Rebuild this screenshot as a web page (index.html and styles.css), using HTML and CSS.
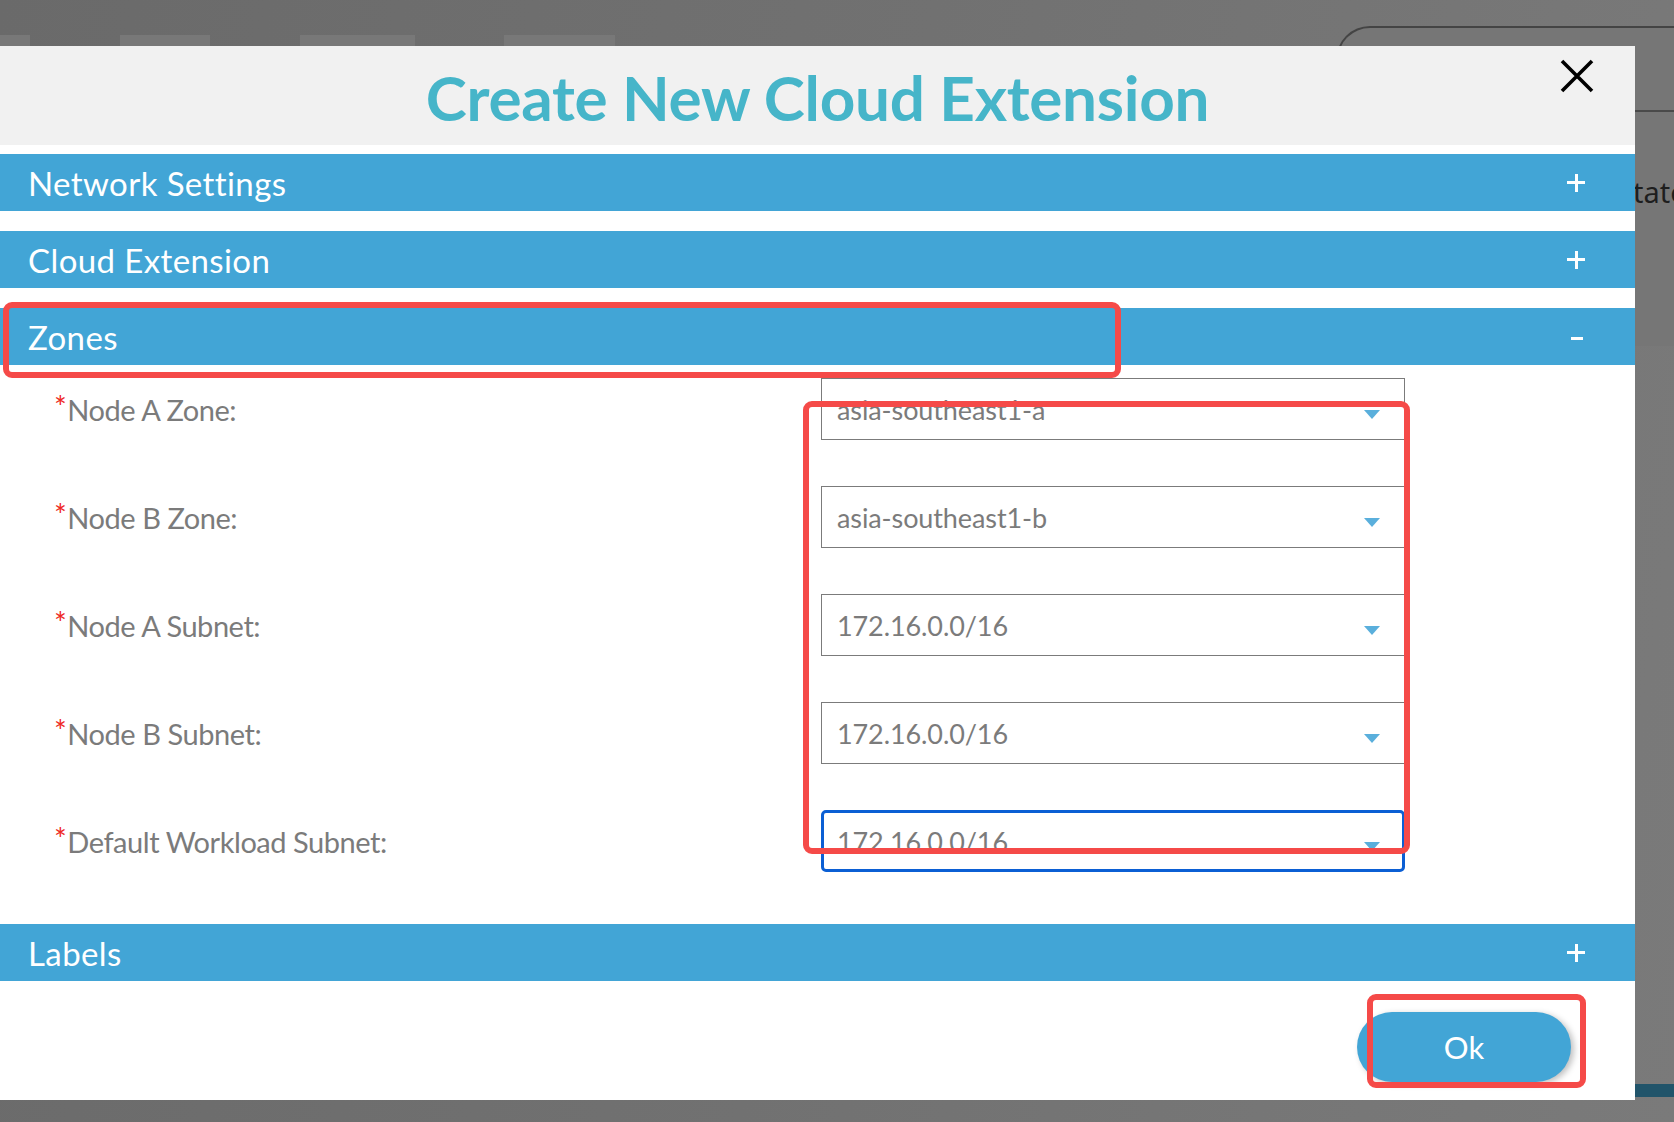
FILE: index.html
```html
<!DOCTYPE html>
<html lang="en">
<head>
<meta charset="utf-8">
<title>Create New Cloud Extension</title>
<link rel="stylesheet" href="styles.css">
</head>
<body>
<div class="page">
  <div class="bg-tabs">
    <span class="bg-tab t1"></span>
    <span class="bg-tab t2"></span>
    <span class="bg-tab t3"></span>
    <span class="bg-tab t4"></span>
  </div>
  <div class="bg-card">
    <div class="bg-card-head"></div>
    <div class="bg-card-row"><span class="bg-text">tate</span></div>
  </div>
  <div class="bg-strip"></div>

  <div class="modal">
    <header class="modal-head">
      <h1 class="modal-title">Create New Cloud Extension</h1>
      <button class="close" aria-label="Close">
        <svg width="34" height="34" viewBox="0 0 34 34"><path d="M2 2 L32 32 M32 2 L2 32" stroke="#000" stroke-width="3.6" fill="none"/></svg>
      </button>
    </header>

    <div class="bar first">
      <span class="bar-title">Network Settings</span>
      <span class="plus"></span>
    </div>
    <div class="bar">
      <span class="bar-title">Cloud Extension</span>
      <span class="plus"></span>
    </div>
    <div class="bar">
      <span class="bar-title">Zones</span>
      <span class="minus"></span>
    </div>

    <div class="zones">
      <div class="row">
        <label class="label"><span class="req">*</span>Node A Zone:</label>
        <div class="select"><span class="value">asia-southeast1-a</span><span class="caret"></span></div>
      </div>
      <div class="row">
        <label class="label"><span class="req">*</span>Node B Zone:</label>
        <div class="select"><span class="value">asia-southeast1-b</span><span class="caret"></span></div>
      </div>
      <div class="row">
        <label class="label"><span class="req">*</span>Node A Subnet:</label>
        <div class="select"><span class="value">172.16.0.0/16</span><span class="caret"></span></div>
      </div>
      <div class="row">
        <label class="label"><span class="req">*</span>Node B Subnet:</label>
        <div class="select"><span class="value">172.16.0.0/16</span><span class="caret"></span></div>
      </div>
      <div class="row">
        <label class="label"><span class="req">*</span>Default Workload Subnet:</label>
        <div class="select focused"><span class="value">172.16.0.0/16</span><span class="caret"></span></div>
      </div>
    </div>

    <div class="bar after-zones">
      <span class="bar-title">Labels</span>
      <span class="plus"></span>
    </div>

    <footer class="modal-foot">
      <button class="ok">Ok</button>
    </footer>
  </div>

  <div class="mark mark-zones"></div>
  <div class="mark mark-selects"></div>
  <div class="mark mark-ok"></div>
</div>
</body>
</html>
```

FILE: styles.css
```css
* { box-sizing: border-box; }

html, body {
  margin: 0;
  padding: 0;
}

body {
  width: 1674px;
  height: 1122px;
  overflow: hidden;
  background: #6c6c6c;
  font-family: Lato, "Noto Sans", sans-serif;
}

.page {
  position: relative;
  width: 1674px;
  height: 1122px;
  padding-top: 46px;
  background: linear-gradient(100deg, #6a6a6a 0%, #717171 50%, #7a7a7a 100%);
}

/* faint content behind the overlay */
.bg-tabs {
  position: absolute;
  left: 0;
  top: 35px;
  width: 700px;
  height: 11px;
}
.bg-tab {
  position: absolute;
  top: 0;
  height: 11px;
  background: #787878;
}
.bg-tab.t1 { left: 0; width: 30px; }
.bg-tab.t2 { left: 120px; width: 90px; }
.bg-tab.t3 { left: 300px; width: 115px; }
.bg-tab.t4 { left: 504px; width: 111px; }

.bg-card {
  position: absolute;
  left: 1336px;
  top: 26px;
  width: 360px;
  height: 320px;
  border-top: 2px solid #444;
  border-left: 2px solid #444;
  border-top-left-radius: 34px;
  background: #767676;
}
.bg-card-head {
  height: 84px;
  border-bottom: 2px solid #4a4a4a;
}
.bg-card-row {
  padding: 60px 0 0 295px;
}
.bg-text {
  font-family: "Noto Sans", sans-serif;
  font-size: 29px;
  color: #1e1e1e;
}

.bg-strip {
  position: absolute;
  left: 1635px;
  top: 1084px;
  width: 39px;
  height: 13px;
  background: #21546a;
}

/* modal */
.modal {
  position: relative;
  width: 1635px;
  height: 1054px;
  background: #fff;
  display: flex;
  flex-direction: column;
}

.modal-head {
  position: relative;
  height: 99px;
  flex-shrink: 0;
  background: #f1f1f1;
  display: flex;
  align-items: center;
  justify-content: center;
}

.modal-title {
  margin: 0;
  font-family: Lato, sans-serif;
  font-weight: 700;
  font-size: 62px;
  letter-spacing: -0.3px;
  color: #46b5c9;
  padding-top: 3px;
}

.close {
  position: absolute;
  right: 41px;
  top: 13px;
  width: 34px;
  height: 34px;
  padding: 0;
  border: 0;
  background: none;
}
.close svg { display: block; }

.bar {
  height: 57px;
  margin-top: 20px;
  background: #42a5d6;
  display: flex;
  align-items: center;
  justify-content: space-between;
  padding: 0 50px 0 28px;
  color: #fff;
  flex-shrink: 0;
}
.bar.first { margin-top: 9px; }
.bar.after-zones { margin-top: 0; }

.bar-title {
  font-size: 33px;
  line-height: 1;
  letter-spacing: 0.4px;
  padding-top: 2px;
}

.plus {
  position: relative;
  width: 18px;
  height: 18px;
}
.plus::before,
.plus::after {
  content: "";
  position: absolute;
  background: #fff;
}
.plus::before { left: 0; top: 7.5px; width: 18px; height: 3px; }
.plus::after { left: 7.5px; top: 0; width: 3px; height: 18px; }

.minus {
  width: 12px;
  height: 3px;
  background: #fff;
  margin-right: 2px;
  margin-top: 4px;
}

.zones {
  padding: 13px 0 52px;
  display: flex;
  flex-direction: column;
  gap: 46px;
  flex-shrink: 0;
}

.row {
  display: grid;
  grid-template-columns: 821px 584px;
  height: 62px;
  align-items: center;
}

.label {
  padding-left: 54px;
  font-size: 29px;
  color: #7b7b7b;
  letter-spacing: -0.45px;
  white-space: nowrap;
}
.req {
  color: #ee2a24;
  font-size: 30px;
  line-height: 0;
  vertical-align: 3px;
  margin-right: 1px;
}

.select {
  height: 62px;
  border: 1px solid #7b7b7b;
  display: flex;
  align-items: center;
  justify-content: space-between;
  padding: 0 24px 0 15px;
}
.select.focused {
  border: 3px solid #0b5fd4;
  border-radius: 5px;
  padding: 0 22px 0 13px;
}
.value {
  font-size: 27px;
  color: #7b7b7b;
  letter-spacing: -0.1px;
}
.caret {
  width: 0;
  height: 0;
  border-left: 8px solid transparent;
  border-right: 8px solid transparent;
  border-top: 9px solid #5aafdc;
  margin-top: 10px;
}

.modal-foot {
  flex: 1;
  display: flex;
  justify-content: flex-end;
  align-items: flex-start;
  padding: 31px 64px 0 0;
}

.ok {
  width: 214px;
  height: 70px;
  border: 0;
  border-radius: 35px;
  background: #42a5d6;
  color: #fff;
  font-family: Lato, sans-serif;
  font-size: 31px;
  box-shadow: 3px 2px 6px rgba(0, 0, 0, 0.25);
}

/* red annotation outlines drawn over the screenshot */
.mark {
  position: absolute;
  border: 6px solid #f54a48;
  border-radius: 9px;
}
.mark-zones { left: 3px; top: 302px; width: 1118px; height: 76px; }
.mark-selects { left: 803px; top: 401px; width: 607px; height: 453px; }
.mark-ok { left: 1367px; top: 994px; width: 219px; height: 94px; }
```
